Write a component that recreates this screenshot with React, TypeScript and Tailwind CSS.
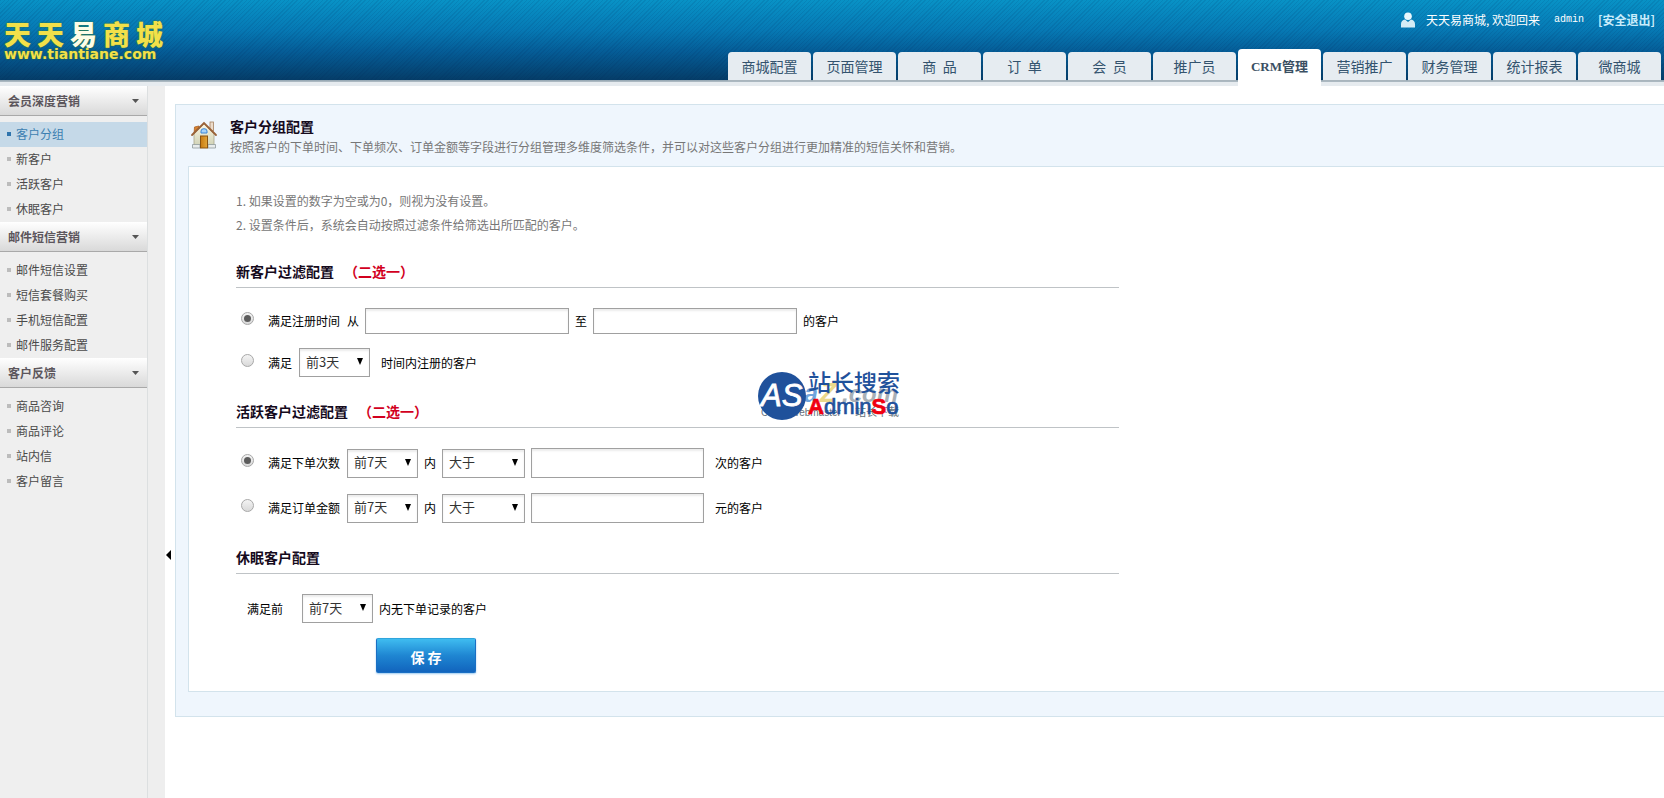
import type { ReactNode } from 'react';

const tabs = ['商城配置', '页面管理', '商  品', '订  单', '会  员', '推广员', 'CRM管理', '营销推广', '财务管理', '统计报表', '微商城'];
const activeTab = 'CRM管理';

const menu = [
  { title: '会员深度营销', items: ['客户分组', '新客户', '活跃客户', '休眠客户'] },
  { title: '邮件短信营销', items: ['邮件短信设置', '短信套餐购买', '手机短信配置', '邮件服务配置'] },
  { title: '客户反馈', items: ['商品咨询', '商品评论', '站内信', '客户留言'] },
];
const activeItem = '客户分组';

function SiteLogo() {
  return (
    <a href="#" className="flex flex-col gap-[3px] pt-[21px] pl-1 font-black text-[#f2e04a] [text-shadow:0_0_2px_#3f7a1c]">
      <span className="flex gap-[6px] text-[27px] leading-[26px]">
        <span>天</span>
        <span>天</span>
        <span className="text-[#fdfde8]">易</span>
        <span>商</span>
        <span>城</span>
      </span>
      <span className="font-['DejaVu_Sans'] text-[14px] leading-[8px] font-bold">www.tiantiane.com</span>
    </a>
  );
}

function UserIcon() {
  return (
    <svg width="16" height="16" viewBox="0 0 16 16" aria-hidden="true">
      <circle cx="8" cy="4.2" r="3.8" fill="#e9f7fc" />
      <path d="M1 15.5V12c0-2.6 1.6-4 4-4.4L8 10l3-2.4c2.4.4 4 1.8 4 4.400v3.500z" fill="#d3ebf5" />
    </svg>
  );
}

function Header() {
  return (
    <header className="flex h-[86px] justify-between bg-[linear-gradient(to_bottom,transparent_80px,#8fa3b0_80px,#b4bfc6_82px,#e6ebef_82px),repeating-linear-gradient(135deg,rgba(0,30,80,0.1)_0_1px,transparent_1px_3px),linear-gradient(to_bottom,#0892c6_0,#0679b4_30px,#055c96_52px,#053d68_80px)]">
      <SiteLogo />
      <div className="flex flex-col items-end justify-between">
        <div className="flex items-center pt-[10px] pr-[9px] text-[12px] leading-5 text-white">
          <UserIcon />
          <span className="ml-[10px]">天天易商城, 欢迎回来</span>
          <span className="ml-[14px] font-['Liberation_Mono'] text-[10px]">admin</span>
          <a href="#" className="ml-[14px] font-bold text-[#c9ecfb]">[安全退出]</a>
        </div>
        <nav className="flex items-end gap-[2px] pr-[3px] text-[14px]">
          {tabs.map((tab) =>
            tab === activeTab ? (
              <a key={tab} href="#" aria-current="page" className="flex h-[37px] w-[83px] justify-center rounded-t bg-white pt-[7px] font-['Liberation_Serif','Noto_Sans_CJK_SC',serif] text-[13px] leading-[22px] font-bold text-[#3a4f63]">
                {tab}
              </a>
            ) : (
              <a key={tab} href="#" className="mb-[5px] flex h-[29px] w-[83px] justify-center rounded-t border-b border-[#a9b5bd] bg-[#e6ecf1] pt-[3px] leading-[22px] whitespace-pre text-[#33536e]">
                {tab}
              </a>
            ),
          )}
        </nav>
      </div>
    </header>
  );
}

function Sidebar() {
  return (
    <aside className="flex w-[165px] shrink-0 bg-[#eeeeee]">
      <div className="w-[148px] border-r border-[#dcdfe0] bg-[#efefef] text-[12px] text-[#4a4a4a]">
        {menu.map((group) => (
          <section key={group.title}>
            <h2 className="mb-[6px] border-b border-[#a9a9a9] bg-linear-to-b from-white to-[#d9d9d9] font-bold text-[#5c565c]">
              <button type="button" className="flex h-[29px] w-full items-center justify-between pr-2 pl-2">
                {group.title}
                <svg width="7" height="4" viewBox="0 0 7 4" aria-hidden="true">
                  <path d="M0 0h7L3.500 4z" fill="#555" />
                </svg>
              </button>
            </h2>
            <ul>
              {group.items.map((item) => (
                <li key={item}>
                  {item === activeItem ? (
                    <a href="#" className="flex h-[25px] items-center gap-[5px] bg-[#c5d9e8] pb-[2px] pl-[7px] text-[#3c7fb1]">
                      <span className="size-1 bg-[#2f74ad]" />
                      {item}
                    </a>
                  ) : (
                    <a href="#" className="flex h-[25px] items-center gap-[5px] pb-[2px] pl-[7px]">
                      <span className="size-1 bg-[#bcbcbc]" />
                      {item}
                    </a>
                  )}
                </li>
              ))}
            </ul>
          </section>
        ))}
      </div>
    </aside>
  );
}

function HouseIcon() {
  return (
    <svg width="28" height="30" viewBox="0 0 28 30" aria-hidden="true" className="mt-[3px]">
      <defs>
        <linearGradient id="wall" x1="0" y1="0" x2="0" y2="1">
          <stop offset="0" stopColor="#fbf6e2" />
          <stop offset="1" stopColor="#cdd0b4" />
        </linearGradient>
        <linearGradient id="door" x1="0" y1="0" x2="1" y2="0">
          <stop offset="0" stopColor="#c87b12" />
          <stop offset="1" stopColor="#e2a63a" />
        </linearGradient>
      </defs>
      <path d="M4.500 7l4.500-1v5l-5 4z" fill="#d9822e" stroke="#a8632a" strokeWidth=".8" />
      <rect x="20" y="2" width="3.500" height="9" fill="#ecdccb" stroke="#a5815f" strokeWidth=".8" />
      <path d="M4 14L14 4 24 14v13H4z" fill="url(#wall)" stroke="#a9a68b" strokeWidth=".8" />
      <path d="M2 15L14 3l12 12" fill="none" stroke="#9a6238" strokeWidth="1.800" strokeLinecap="round" />
      <path d="M2.500 24.500H10V28H2.500zM18 24.500h7.500V28H18z" fill="#e8ecec" stroke="#8f9a9c" strokeWidth=".8" />
      <rect x="10.500" y="16" width="7" height="12" fill="url(#door)" stroke="#8a5310" />
      <path d="M11 13v-2a3 2.300 0 016 0v2z" fill="#a5d2fa" stroke="#3b86d8" />
    </svg>
  );
}

function SectionTitle({ children, note }: { children: ReactNode; note?: string }) {
  return (
    <h2 className="mt-[22px] mb-5 max-w-[883px] border-b border-[#bfc3c6] pb-1 text-[14px] leading-6 font-bold text-[#150a1c]">
      {children}
      {note && <span className="ml-[10px] text-[#d2001e]">{note}</span>}
    </h2>
  );
}

function Radio({ id, name, checked }: { id: string; name: string; checked?: boolean }) {
  return (
    <input
      id={id}
      name={name}
      type="radio"
      defaultChecked={checked}
      className="mr-[14px] mb-[5px] flex size-[13px] shrink-0 appearance-none items-center justify-center rounded-full border border-[#a8a8a8] bg-linear-to-b from-[#f4f4f4] to-[#d9d9d9] checked:before:size-[7px] checked:before:rounded-full checked:before:bg-[#5c5c5c] checked:before:content-['']"
    />
  );
}

const boxStyle = 'border border-[#a0a0a0] bg-white shadow-[inset_0_2px_2px_#ececec]';

function Select({ label, options, wide }: { label: string; options: string[]; wide?: boolean }) {
  return (
    <span className={wide ? 'relative w-[83px]' : 'relative w-[71px]'}>
      <select aria-label={label} className={`block h-[29px] w-full appearance-none pb-[2px] pl-[6px] text-[13px] text-[#333] ${boxStyle}`}>
        {options.map((o) => (
          <option key={o}>{o}</option>
        ))}
      </select>
      <svg width="6" height="7" viewBox="0 0 6 7" aria-hidden="true" className="pointer-events-none absolute top-[10px] right-[7px]">
        <path d="M0 0h6L3 7z" fill="#000" />
      </svg>
    </span>
  );
}

function CountRow({ id, label, suffix, checked }: { id: string; label: string; suffix: string; checked?: boolean }) {
  return (
    <div className="flex items-center pl-[5px]">
      <Radio id={id} name="active" checked={checked} />
      <label htmlFor={id}>{label}</label>
      <span className="ml-[7px] flex items-center gap-[6px]">
        <Select label={`${label}时间`} options={['前7天', '前15天', '前30天']} />
        内
        <Select label={`${label}条件`} options={['大于', '小于', '等于']} wide />
        <input type="text" aria-label={label} className={`h-[30px] w-[173px] px-1 ${boxStyle}`} />
      </span>
      <span className="ml-[11px]">{suffix}</span>
    </div>
  );
}

function Watermark() {
  return (
    <svg width="160" height="76" viewBox="0 -14 160 76" className="pointer-events-none absolute top-[190px] left-[567px]" aria-hidden="true">
      <text x="48" y="31" fontFamily="Liberation Sans" fontSize="25" fontWeight="bold" fontStyle="italic" fill="#6ea3dc">a</text>
      <text x="64" y="31" fontFamily="Liberation Sans" fontSize="27" fontWeight="bold" fontStyle="italic" fill="#ead98a">Z</text>
      <text x="86" y="31" fontFamily="Liberation Sans" fontSize="24" fontWeight="bold" fontStyle="italic" fill="#a9b0b6">.com</text>
      <text x="5" y="45" fontFamily="Liberation Sans" fontSize="10" fill="#66727c">China Webmaster</text>
      <text x="99" y="45" fontFamily="Noto Sans CJK SC" fontSize="11" fill="#66727c">站长下载</text>
      <circle cx="26" cy="25" r="24" fill="#1f519b" />
      <text x="5" y="35" fontFamily="Liberation Sans" fontSize="31" fontStyle="italic" fill="#fff" stroke="#fff" strokeWidth=".8">AS</text>
      <text x="52" y="20" fontFamily="Noto Sans CJK SC" fontSize="23" fontWeight="500" fill="#1f519b">站长搜索</text>
      <text x="52" y="43" fontFamily="Liberation Sans" fontSize="22" fill="#1f519b" stroke="#1f519b" strokeWidth=".7">
        <tspan fill="#f00010" stroke="#f00010" fontWeight="bold">A</tspan>dmin<tspan fill="#f00010" stroke="#f00010" fontWeight="bold">S</tspan>o
      </text>
    </svg>
  );
}

function SettingsForm() {
  return (
    <form className="relative border-y border-l border-[#d3e3ec] bg-white pt-[22px] pb-[18px] pl-[47px] text-[12px] text-black">
      <ol className="leading-6 text-[#777]">
        <li>1. 如果设置的数字为空或为0，则视为没有设置。</li>
        <li>2. 设置条件后，系统会自动按照过滤条件给筛选出所匹配的客户。</li>
      </ol>

      <SectionTitle note="（二选一）">新客户过滤配置</SectionTitle>
      <div className="flex flex-col gap-[14px]">
        <div className="flex items-center pl-[5px]">
          <Radio id="reg-range" name="new" checked />
          <label htmlFor="reg-range">满足注册时间</label>
          <span className="ml-[7px] flex items-center gap-[6px]">
            从
            <input type="text" aria-label="开始时间" className={`h-[26px] w-[204px] px-1 ${boxStyle}`} />
            至
            <input type="text" aria-label="结束时间" className={`h-[26px] w-[204px] px-1 ${boxStyle}`} />
            的客户
          </span>
        </div>
        <div className="flex items-center pl-[5px]">
          <Radio id="reg-recent" name="new" />
          <label htmlFor="reg-recent" className="mr-[7px]">满足</label>
          <Select label="注册时间" options={['前3天', '前7天', '前15天']} />
          <span className="ml-[11px]">时间内注册的客户</span>
        </div>
      </div>

      <SectionTitle note="（二选一）">活跃客户过滤配置</SectionTitle>
      <div className="flex flex-col gap-[15px]">
        <CountRow id="order-count" label="满足下单次数" suffix="次的客户" checked />
        <CountRow id="order-amount" label="满足订单金额" suffix="元的客户" />
      </div>

      <SectionTitle>休眠客户配置</SectionTitle>
      <div className="flex items-center pl-[11px]">
        <span className="mr-[19px]">满足前</span>
        <Select label="无下单时间" options={['前7天', '前15天', '前30天']} />
        <span className="ml-[6px]">内无下单记录的客户</span>
      </div>
      <button
        type="button"
        className="mt-[15px] ml-[140px] block h-[35px] w-[100px] rounded-[2px] border border-[#1a6fc4] border-t-[#2fa5dc] bg-linear-to-b from-[#3fbcf0] via-[#1f86d2] to-[#1264bd] pt-1 text-[14px] font-bold text-white shadow-[0_1px_2px_#9ccaf0]"
      >
        保 存
      </button>
      <Watermark />
    </form>
  );
}

export default function App() {
  return (
    <div className="flex min-h-screen flex-col bg-white font-['Noto_Sans_CJK_SC',sans-serif]">
      <Header />
      <div className="flex flex-1">
        <Sidebar />
        <div className="w-[10px] shrink-0">
          <button type="button" aria-label="收起菜单" className="mt-[464px] ml-px block">
            <svg width="5" height="10" viewBox="0 0 5 10" aria-hidden="true" className="block">
              <path d="M5 0v10L0 5z" fill="#000" />
            </svg>
          </button>
        </div>
        <main className="min-w-0 flex-1 pt-[18px] pb-6">
          <div className="border-y border-l border-[#d3e3ec] bg-[#eff6fd] pb-6 pl-3">
            <div className="flex h-[61px] items-start gap-3 pt-3 pl-[2px]">
              <HouseIcon />
              <div>
                <h1 className="text-[14px] leading-[18px] font-bold text-[#150a1c]">客户分组配置</h1>
                <p className="mt-[2px] text-[12px] leading-5 text-[#777]">
                  按照客户的下单时间、下单频次、订单金额等字段进行分组管理多维度筛选条件，并可以对这些客户分组进行更加精准的短信关怀和营销。
                </p>
              </div>
            </div>
            <SettingsForm />
          </div>
        </main>
      </div>
    </div>
  );
}
